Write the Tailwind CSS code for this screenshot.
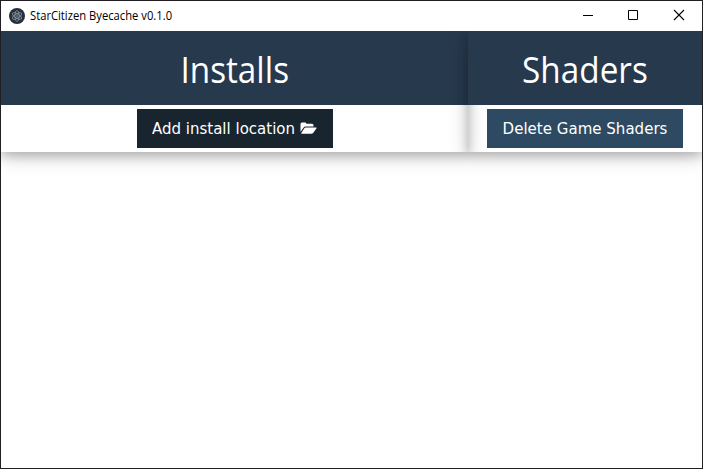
<!DOCTYPE html>
<html lang="en">
<head>
<meta charset="utf-8">
<title>StarCitizen Byecache v0.1.0</title>
<script src="https://cdn.jsdelivr.net/npm/@tailwindcss/browser@4"></script>
</head>
<body class="bg-white">
<div class="flex h-[469px] w-[703px] flex-col overflow-hidden border border-[#211f22] bg-white">
  <header class="flex h-[30px] shrink-0 items-center bg-white pl-2">
    <svg class="h-4 w-4" viewBox="0 0 16 16" fill="none">
      <circle cx="8" cy="8" r="8" fill="#2b2e3a"/>
      <g stroke="#a9cdd6" stroke-width=".65" opacity=".8">
        <ellipse cx="8" cy="8" rx="5.3" ry="2.1" transform="rotate(30 8 8)"/>
        <ellipse cx="8" cy="8" rx="5.3" ry="2.1" transform="rotate(90 8 8)"/>
        <ellipse cx="8" cy="8" rx="5.3" ry="2.1" transform="rotate(150 8 8)"/>
      </g>
      <circle cx="8" cy="8" r=".7" fill="#a9cdd6"/>
    </svg>
    <span class="ml-[5px] origin-left scale-x-[0.935] whitespace-nowrap font-['Open_Sans',sans-serif] text-[12px] leading-4 text-black">StarCitizen Byecache v0.1.0</span>
    <div class="ml-auto flex h-full">
      <svg class="h-[30px] w-[45px]" viewBox="0 0 45 30"><path d="M17 14.5h10" stroke="#000"/></svg>
      <svg class="h-[30px] w-[45px]" viewBox="0 0 45 30"><path d="M17.5 9.5h9v9h-9z" fill="none" stroke="#000"/></svg>
      <svg class="h-[30px] w-[46px]" viewBox="0 0 46 30"><path d="M18 9l10 10M28 9L18 19" stroke="#000" stroke-width="1.1"/></svg>
    </div>
  </header>
  <main class="flex grow overflow-hidden">
    <section class="relative h-[121px] w-[467px] shadow-[0_4px_10px_0_rgba(0,0,0,0.2),0_4px_20px_0_rgba(0,0,0,0.19)]">
      <h1 class="flex h-[74px] items-center justify-center bg-[#26394d] pt-1 font-['Open_Sans',sans-serif] text-[36px] text-white"><span class="inline-block scale-x-[0.925]">Installs</span></h1>
      <div class="flex justify-center pt-1">
        <button class="flex h-[39px] w-[196px] items-center justify-center gap-[5px] whitespace-nowrap bg-[#18252f] pt-0.5 font-['DejaVu_Sans',sans-serif] text-[15px] text-white">
          <span>Add install location</span>
          <svg class="-mt-0.5 h-[15px] w-[17px]" viewBox="0 0 17 15" fill="#fff"><path d="M.5 11V3Q.5 1.5 2 1.5H5Q6.3 1.5 6.3 2.8H12Q13.5 2.8 13.5 4.3V5.5H5.8Q4.5 5.5 3.6 6.6Z"/><path d="M5.8 6.5H16Q17 6.5 16.5 7.3L13.5 11.6Q12.6 12.8 11.2 12.8H1.8Q.7 12.8 1.3 12L4.2 7.5Q4.9 6.5 5.8 6.5Z"/></svg>
        </button>
      </div>
    </section>
    <section class="relative h-[121px] w-[234px] shadow-[0_4px_10px_0_rgba(0,0,0,0.2),0_4px_20px_0_rgba(0,0,0,0.19)]">
      <h1 class="flex h-[74px] items-center justify-center bg-[#26394d] pt-1 font-['Open_Sans',sans-serif] text-[36px] text-white"><span class="inline-block scale-x-[0.925]">Shaders</span></h1>
      <div class="flex justify-center pt-1">
        <button class="flex h-[39px] w-[196px] items-center justify-center whitespace-nowrap bg-[#2e4a62] pt-0.5 font-['DejaVu_Sans',sans-serif] text-[15px] tracking-[0.02px] text-white">Delete Game Shaders</button>
      </div>
    </section>
  </main>
</div>
</body>
</html>
